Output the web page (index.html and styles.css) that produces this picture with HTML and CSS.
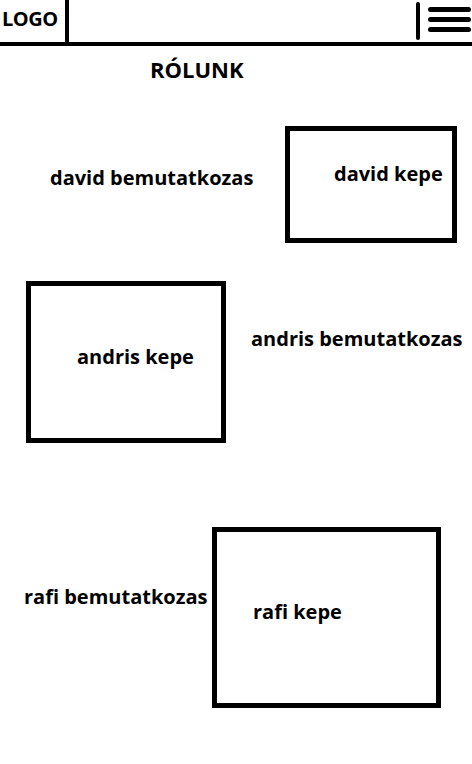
FILE: index.html
```html
<!DOCTYPE html>
<html lang="hu">
<head>
<meta charset="utf-8">
<title>Rólunk</title>
<link rel="stylesheet" href="styles.css">
</head>
<body>
<header class="header">
  <div class="logo">LOGO</div>
  <div class="spacer"></div>
  <div class="menu-bar"></div>
  <div class="menu-lines">
    <span class="menu-line"></span>
    <span class="menu-line"></span>
    <span class="menu-line"></span>
  </div>
</header>
<h1 class="title">RÓLUNK</h1>
<main class="content">
  <section class="row row-david">
    <p class="intro intro-david">david bemutatkozas</p>
    <div class="photo photo-david">david kepe</div>
  </section>
  <section class="row row-andris">
    <div class="photo photo-andris">andris kepe</div>
    <p class="intro intro-andris">andris bemutatkozas</p>
  </section>
  <section class="row row-rafi">
    <p class="intro intro-rafi">rafi bemutatkozas</p>
    <div class="photo photo-rafi">rafi kepe</div>
  </section>
</main>
</body>
</html>
```
FILE: styles.css
```css
* { box-sizing: border-box; }
html, body { margin: 0; padding: 0; background: #fff; }
body {
  font-family: "Open Sans", "DejaVu Sans", sans-serif;
  font-weight: 700;
  font-size: 20px;
  line-height: 24px;
  color: #000;
  width: 472px;
}
.header {
  display: flex;
  align-items: flex-start;
  height: 46px;
  border-bottom: 4px solid #000;
  padding-right: 1px;
}
.logo {
  width: 69px;
  height: 42px;
  border-right: 4px solid #000;
  padding: 7px 0 0 2px;
  letter-spacing: -0.5px;
}
.spacer { flex: 1; }
.menu-bar {
  width: 4px;
  height: 38px;
  margin-top: 2px;
  margin-right: 8px;
  background: #000;
  border-radius: 2px;
}
.menu-lines {
  display: flex;
  flex-direction: column;
  gap: 5px;
  width: 43px;
  padding-top: 7px;
}
.menu-line {
  display: block;
  height: 5px;
  background: #000;
  border-radius: 3px;
}
.title {
  margin: 11px 0 0 150px;
  font-size: 22px;
  line-height: 24px;
  font-weight: 700;
}
.row {
  display: flex;
  align-items: flex-start;
}
.intro { margin: 0; white-space: nowrap; }
.photo {
  border: 5px solid #000;
  white-space: nowrap;
}
.row-david { margin-top: 45px; padding-left: 50px; }
.intro-david { margin-top: 40px; }
.photo-david {
  margin-left: auto;
  margin-right: 15px;
  width: 172px;
  height: 117px;
  padding: 31px 0 0 44px;
}
.row-andris { margin-top: 38px; padding-left: 26px; }
.photo-andris {
  width: 200px;
  height: 162px;
  padding: 59px 0 0 46px;
}
.intro-andris { margin: 46px 0 0 25px; }
.row-rafi { margin-top: 84px; padding-left: 24px; }
.intro-rafi { margin-top: 58px; }
.photo-rafi {
  margin-left: auto;
  margin-right: 31px;
  width: 229px;
  height: 181px;
  padding: 68px 0 0 36px;
}
```
